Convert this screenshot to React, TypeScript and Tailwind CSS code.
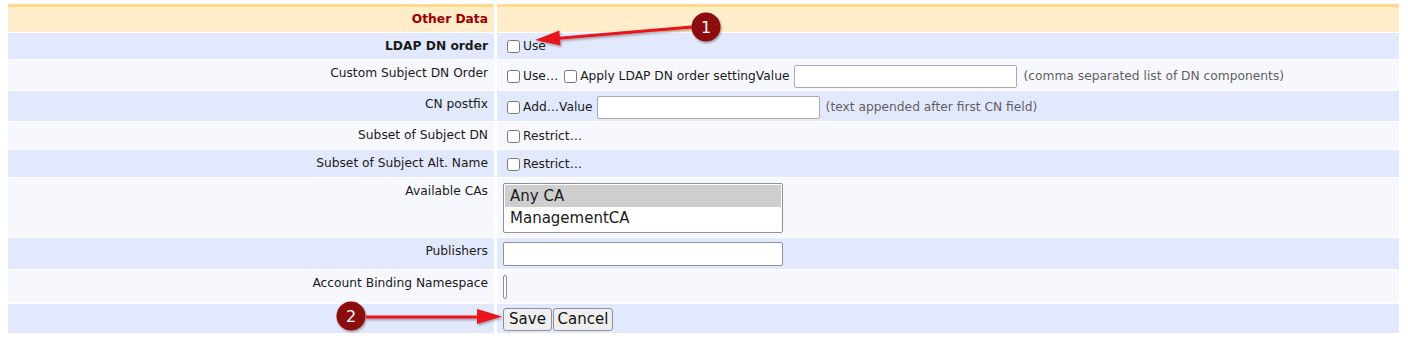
import type { ReactNode } from "react";

const font = { fontFamily: '"DejaVu Sans", Verdana, sans-serif' };

function Row({
  label,
  bold,
  tone,
  h,
  pad = "pt-px",
  children,
}: {
  label: string;
  bold?: boolean;
  tone: "dark" | "light";
  h: string;
  pad?: string;
  children?: ReactNode;
}) {
  const bg = tone === "dark" ? "bg-[#e3e9fc]" : "bg-[#f7f8fe]";
  return (
    <div className={`grid grid-cols-[486px_902px] gap-x-[3px] ${h}`}>
      <div
        className={`${bg} pr-[6px] pt-[6px] text-right text-[12.25px] leading-[15px] text-[#1a1a1a] ${
          bold ? "font-bold" : ""
        }`}
      >
        {label}
      </div>
      <div className={`${bg} flex items-center pl-[6px] ${pad} text-[12.25px] text-[#1a1a1a]`}>
        {children}
      </div>
    </div>
  );
}

function Check({ text }: { text: string }) {
  return (
    <label className="flex items-center">
      <input type="checkbox" className="ml-1 mr-[3px] h-[13px] w-[13px]" />
      <span>{text}</span>
    </label>
  );
}

function Help({ children }: { children: ReactNode }) {
  return <span className="ml-[6px] text-[#5f5f5f]">{children}</span>;
}

export default function App() {
  return (
    <div className="relative h-[342px] w-[1408px] overflow-hidden bg-white" style={font}>
      <div className="ml-2 flex w-[1391px] flex-col gap-px pt-1">
        {/* Section header */}
        <div className="grid h-[28px] grid-cols-[486px_902px] gap-x-[3px]">
          <div className="border-t-[3px] border-[#ffd98f] bg-[#ffecc8] pr-[6px] pt-[5px] text-right text-[12.25px] font-bold leading-[15px] text-[#990000]">
            Other Data
          </div>
          <div className="border-t-[3px] border-[#ffd98f] bg-[#ffecc8]" />
        </div>

        <Row label="LDAP DN order" bold tone="dark" h="h-[26px]">
          <Check text="Use" />
        </Row>

        <Row label="Custom Subject DN Order" tone="light" h="h-[30px]" pad="pt-[3px]">
          <Check text="Use…" />
          <span className="w-[2px]" />
          <Check text="Apply LDAP DN order settingValue" />
          <input className="ml-[5px] h-[23px] w-[223px] rounded-[2px] border border-[#a9a9b4] bg-white" />
          <Help>(comma separated list of DN components)</Help>
        </Row>

        <Row label="CN postfix" tone="dark" h="h-[30px]" pad="pt-[3px]">
          <Check text="Add…Value" />
          <input className="ml-[4px] h-[23px] w-[223px] rounded-[2px] border border-[#a9a9b4] bg-white" />
          <Help>(text appended after first CN field)</Help>
        </Row>

        <Row label="Subset of Subject DN" tone="light" h="h-[27px]" pad="pt-[2px]">
          <Check text="Restrict…" />
        </Row>

        <Row label="Subset of Subject Alt. Name" tone="dark" h="h-[27px]" pad="pt-[2px]">
          <Check text="Restrict…" />
        </Row>

        <Row label="Available CAs" tone="light" h="h-[59px]">
          <div className="flex h-[50px] w-[280px] flex-col rounded-[2px] border border-[#8f8f9d] bg-white p-px text-[15px] leading-[22px]">
            <div className="bg-[#cecece] pl-[5px]">Any CA</div>
            <div className="pl-[5px]">ManagementCA</div>
          </div>
        </Row>

        <Row label="Publishers" tone="dark" h="h-[31px]">
          <input className="h-[24px] w-[280px] rounded-[2px] border border-[#8f8f9d] bg-white" />
        </Row>

        <Row label="Account Binding Namespace" tone="light" h="h-[33px]">
          <div className="h-[24px] w-[4px] rounded-[2px] border border-[#8f8f9d] bg-white" />
        </Row>

        <div className="grid h-[29px] grid-cols-[486px_902px] gap-x-[3px]">
          <div className="bg-[#e3e9fc]" />
          <div className="flex items-center gap-px bg-[#e3e9fc] pl-[6px] pt-[2px] text-[15px]">
            <button className="h-[23px] w-[49px] rounded-[3px] border border-[#8f8f9d] bg-[#efefef] leading-[21px] text-[#111]">
              Save
            </button>
            <button className="h-[23px] w-[60px] rounded-[3px] border border-[#8f8f9d] bg-[#efefef] leading-[21px] text-[#111]">
              Cancel
            </button>
          </div>
        </div>
      </div>

      {/* Callout annotations */}
      <svg
        className="pointer-events-none absolute left-0 top-0"
        width="1408"
        height="342"
        viewBox="0 0 1408 342"
      >
        <defs>
          <filter id="sh" x="-20%" y="-50%" width="140%" height="200%">
            <feDropShadow dx="1" dy="1.5" stdDeviation="1.2" floodColor="#000" floodOpacity="0.35" />
          </filter>
        </defs>
        <g filter="url(#sh)">
          <line x1="692" y1="27" x2="556" y2="38.5" stroke="#e8141b" strokeWidth="3" />
          <polygon points="535,40 560.5,45.5 559.3,30.5" fill="#e8141b" />
          <circle cx="706" cy="27" r="14.5" fill="#8b0a0a" />
          <line x1="366" y1="317" x2="480" y2="317" stroke="#e8141b" strokeWidth="3" />
          <polygon points="502,316.5 477,309 477,324" fill="#e8141b" />
          <circle cx="351" cy="316" r="14.5" fill="#8b0a0a" />
        </g>
        <text x="706" y="33" textAnchor="middle" fontSize="16" fill="#fff" style={font}>
          1
        </text>
        <text x="351" y="322" textAnchor="middle" fontSize="16" fill="#fff" style={font}>
          2
        </text>
      </svg>
    </div>
  );
}
